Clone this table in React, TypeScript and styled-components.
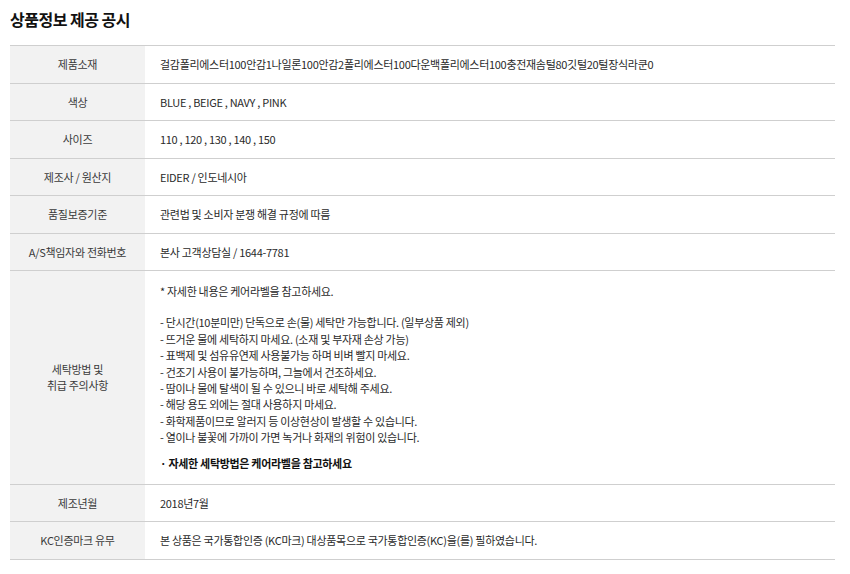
import styled, { createGlobalStyle } from "styled-components";

const GlobalStyle = createGlobalStyle`
  html, body {
    margin: 0;
    padding: 0;
    background: #fff;
  }
  body {
    font-family: "Noto Sans CJK KR", "Noto Sans", sans-serif;
    color: #333;
  }
`;

const Wrapper = styled.div`
  padding: 10px 15px 0 10px;
`;

const Title = styled.h2`
  margin: 0;
  height: 35px;
  font-size: 16px;
  line-height: 18px;
  font-weight: 700;
  color: #111;
  letter-spacing: -0.5px;
`;

const Table = styled.table`
  width: 825px;
  border-collapse: collapse;
  border-top: 1px solid #cfcfcf;
  table-layout: fixed;
`;

const Th = styled.th`
  width: 135px;
  box-sizing: border-box;
  background: #f2f2f2;
  border-bottom: 1px solid #cfcfcf;
  padding: 10px 5px;
  font-size: 11px;
  line-height: 16.5px;
  font-weight: 400;
  color: #3a3a3a;
  text-align: center;
  vertical-align: middle;
  letter-spacing: -0.3px;
`;

const Td = styled.td<{ $tall?: boolean }>`
  border-bottom: 1px solid #cfcfcf;
  padding: ${({ $tall }) => ($tall ? "11.5px 15px 12px" : "10px 15px")};
  font-size: 11px;
  line-height: ${({ $tall }) => ($tall ? "16.4px" : "16.5px")};
  color: #2a2a2a;
  text-align: left;
  vertical-align: middle;
  letter-spacing: -0.3px;
`;

const Line = styled.div`
  white-space: nowrap;
`;

const Blank = styled.div`
  height: 15.5px;
`;

const Note = styled.div`
  margin-top: 9.5px;
  font-weight: 700;
  color: #111;
`;

const rows: [string, string][] = [
  [
    "제품소재",
    "걸감폴리에스터100안감1나일론100안감2폴리에스터100다운백폴리에스터100충전재솜털80깃털20털장식라쿤0",
  ],
  ["색상", "BLUE , BEIGE , NAVY , PINK"],
  ["사이즈", "110 , 120 , 130 , 140 , 150"],
  ["제조사 / 원산지", "EIDER / 인도네시아"],
  ["품질보증기준", "관련법 및 소비자 분쟁 해결 규정에 따름"],
  ["A/S책임자와 전화번호", "본사 고객상담실 / 1644-7781"],
];

const careLines = [
  "- 단시간(10분미만) 단독으로 손(물) 세탁만 가능합니다. (일부상품 제외)",
  "- 뜨거운 물에 세탁하지 마세요. (소재 및 부자재 손상 가능)",
  "- 표백제 및 섬유유연제 사용불가능 하며 비벼 빨지 마세요.",
  "- 건조기 사용이 불가능하며, 그늘에서 건조하세요.",
  "- 땀이나 물에 탈색이 될 수 있으니 바로 세탁해 주세요.",
  "- 해당 용도 외에는 절대 사용하지 마세요.",
  "- 화학제품이므로 알러지 등 이상현상이 발생할 수 있습니다.",
  "- 열이나 불꽃에 가까이 가면 녹거나 화재의 위험이 있습니다.",
];

const tailRows: [string, string][] = [
  ["제조년월", "2018년7월"],
  ["KC인증마크 유무", "본 상품은 국가통합인증 (KC마크) 대상품목으로 국가통합인증(KC)을(를) 필하였습니다."],
];

export default function App() {
  return (
    <>
      <GlobalStyle />
      <Wrapper>
        <Title>상품정보 제공 공시</Title>
        <Table>
          <tbody>
            {rows.map(([label, value]) => (
              <tr key={label}>
                <Th>{label}</Th>
                <Td>{value}</Td>
              </tr>
            ))}
            <tr>
              <Th>
                세탁방법 및
                <br />
                취급 주의사항
              </Th>
              <Td $tall>
                <Line>* 자세한 내용은 케어라벨을 참고하세요.</Line>
                <Blank />
                {careLines.map((line) => (
                  <Line key={line}>{line}</Line>
                ))}
                <Note>· 자세한 세탁방법은 케어라벨을 참고하세요</Note>
              </Td>
            </tr>
            {tailRows.map(([label, value]) => (
              <tr key={label}>
                <Th>{label}</Th>
                <Td>{value}</Td>
              </tr>
            ))}
          </tbody>
        </Table>
      </Wrapper>
    </>
  );
}
